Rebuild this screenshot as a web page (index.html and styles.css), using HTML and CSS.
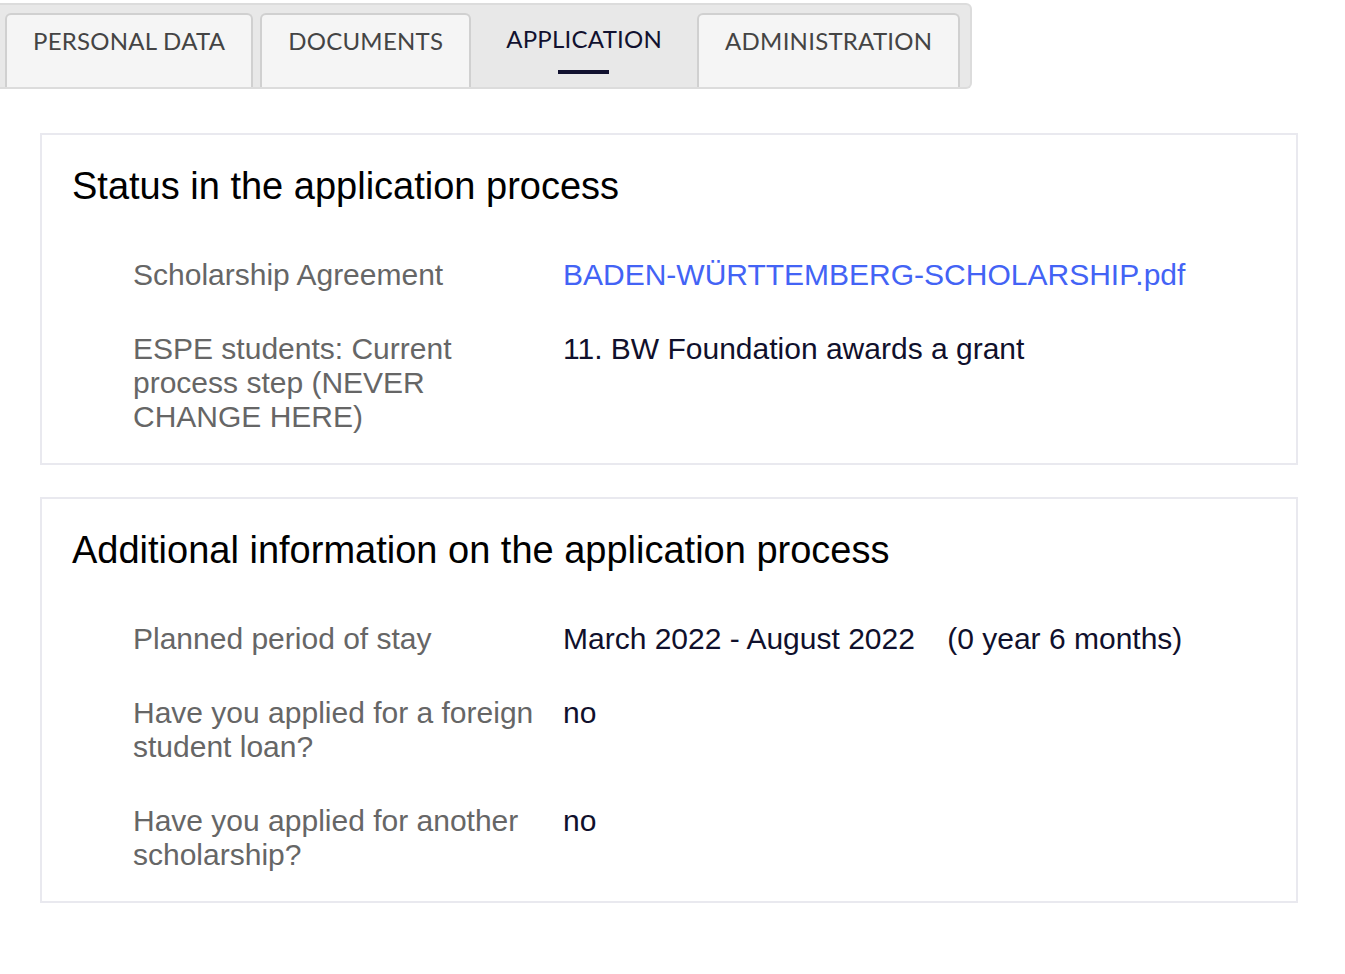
FILE: index.html
```html
<!DOCTYPE html>
<html lang="en">
<head>
  <meta charset="UTF-8">
  <title>Application</title>
  <link rel="stylesheet" href="styles.css">
</head>
<body>

<div class="tabbar">
  <div class="tab">PERSONAL DATA</div>
  <div class="tab">DOCUMENTS</div>
  <div class="tab active">APPLICATION</div>
  <div class="tab">ADMINISTRATION</div>
</div>

<div class="content">
  <div class="card">
    <h2>Status in the application process</h2>
    <div class="rows">
      <div class="row">
        <div class="label">Scholarship Agreement</div>
        <div class="value"><a href="#">BADEN-WÜRTTEMBERG-SCHOLARSHIP.pdf</a></div>
      </div>
      <div class="row">
        <div class="label">ESPE students: Current process step (NEVER CHANGE HERE)</div>
        <div class="value">11. BW Foundation awards a grant</div>
      </div>
    </div>
  </div>

  <div class="card">
    <h2>Additional information on the application process</h2>
    <div class="rows">
      <div class="row">
        <div class="label">Planned period of stay</div>
        <div class="value">March 2022 - August 2022 <span class="dur">(0 year 6 months)</span></div>
      </div>
      <div class="row">
        <div class="label">Have you applied for a foreign student loan?</div>
        <div class="value">no</div>
      </div>
      <div class="row">
        <div class="label">Have you applied for another scholarship?</div>
        <div class="value">no</div>
      </div>
    </div>
  </div>
</div>

</body>
</html>
```

FILE: styles.css
```css
body { margin: 0; background: #fff; font-family: "Liberation Sans", Arial, sans-serif; color: #10102c; }

.tabbar { display: inline-flex; gap: 7px; margin-top: 3px; padding: 8px 10px 0 5px; background: #e8e8e8; border: 2px solid #dcdcdc; border-left: none; border-radius: 0 6px 6px 0; height: 74px; }
.tab { font-family: Lato, "Open Sans", sans-serif; font-size: 24px; letter-spacing: 0.25px; color: #444; padding: 11px 26px 0; background: #f5f5f5; border: 2px solid #d0d0d0; border-bottom: none; border-radius: 6px 6px 0 0; box-sizing: border-box; height: 74px; }
.tab.active { background: transparent; border-color: transparent; color: #11112f; padding-top: 9px; position: relative; }
.tab.active::after { content: ""; position: absolute; left: 50%; margin-left: -26px; width: 51px; height: 4px; top: 55px; background: #11112f; }

.content { padding: 44px 0 0 40px; width: 1258px; }
.card { border: 2px solid #e9e9ef; padding: 31px 30px 29px; margin-bottom: 32px; }
.card h2 { margin: 0 0 52px; font-size: 38px; line-height: 40px; font-weight: normal; color: #000; }

.rows { padding-left: 61px; display: flex; flex-direction: column; gap: 40px; }
.row { display: flex; gap: 15px; font-size: 30px; line-height: 34px; }
.label { width: 415px; color: #666; flex-shrink: 0; }
.value { color: #10102c; }
.value a { color: #4363f5; text-decoration: none; }
.dur { margin-left: 24px; }
```
